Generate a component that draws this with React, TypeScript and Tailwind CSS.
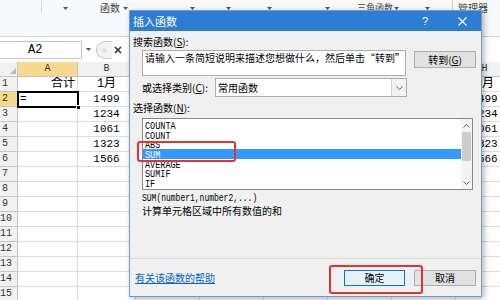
import React from 'react';

const MONO = "font-['Liberation_Mono','Noto_Sans_CJK_SC',monospace]";
const CJK = "font-['Noto_Sans_CJK_SC','Liberation_Sans',sans-serif]";

// C-G sit entirely under the dialog, so their header letters are left out
const COLS = [
  { name: 'A', label: 'A', w: 'w-[60px]' },
  { name: 'B', label: 'B', w: 'w-[58px]' },
  { name: 'C', label: '', w: 'w-[64px]' },
  { name: 'D', label: '', w: 'w-[64px]' },
  { name: 'E', label: '', w: 'w-[64px]' },
  { name: 'F', label: '', w: 'w-[64px]' },
  { name: 'G', label: '', w: 'w-[64px]' },
  { name: 'H', label: 'H', w: 'w-[58px]' },
];

const ROWS: { a?: string; b?: string }[] = [
  { a: '合计', b: '1月' },
  { a: '=', b: '1499' },
  { b: '1234' },
  { b: '1061' },
  { b: '1323' },
  { b: '1566' },
  {}, {}, {}, {}, {}, {}, {}, {}, {},
];

const FUNCS = ['COUNTA', 'COUNT', 'ABS', 'SUM', 'AVERAGE', 'SUMIF', 'IF'];

const Caret = () => (
  <svg width="5" height="3" viewBox="0 0 5 3" className="shrink-0">
    <path d="M0 0 L5 0 L2.5 3 Z" fill="#555" />
  </svg>
);

const Ribbon = () => (
  <div className="flex items-start h-[37px] bg-[#f8f9fa] border-b border-[#d3d3d3] text-[#444]">
    <div className="w-[42px] h-[13px] shrink-0 border-r border-[#d8d8d8]" />
    <div className="ml-[21px] mt-[7px]"><Caret /></div>
    <span className="ml-[32px] text-[10px] leading-[13px] pt-[1px]">函数</span>
    <div className="ml-[3px] mt-[7px]"><Caret /></div>
    <div className="ml-[62px] mt-[7px]"><Caret /></div>
    <div className="ml-[31px] mt-[7px]"><Caret /></div>
    <div className="ml-[36px] mt-[7px]"><Caret /></div>
    <div className="ml-[53px] mt-[7px]"><Caret /></div>
    <span className="ml-[27px] text-[9px] leading-[13px] pt-[1px]">三角函数</span>
    <div className="ml-[1px] mt-[7px]"><Caret /></div>
    <div className="ml-[26px] mt-[7px]"><Caret /></div>
    <div className="ml-[22px] w-px h-[35px] bg-[#d0d0d0]" />
    <span className="ml-[5px] text-[10px] leading-[13px] pt-[1px] whitespace-nowrap">管理器</span>
  </div>
);

const FormulaBar = () => (
  <div className="flex items-center h-[25px] bg-white">
    <div className={`w-[82px] h-[18px] shrink-0 bg-white border border-[#c6c6c6] border-l-0 pl-[28px] text-[12px] leading-[16px] ${MONO}`}>A2</div>
    <div className="ml-[4px]"><Caret /></div>
    <div className="ml-[5px] w-[16px] h-[18px] rounded-l-full border border-r-0 border-[#c6c6c6] bg-[#f2f2f2] flex items-center justify-center text-[8px] text-[#bbb]">=</div>
    <svg width="8" height="8" viewBox="0 0 8 8" className="ml-[2px]">
      <path d="M1 1 L7 7 M7 1 L1 7" stroke="#333" strokeWidth="1.6" />
    </svg>
  </div>
);

const Grid = () => (
  <div className={`relative ${MONO}`}>
    <div className="flex h-[15px]">
      <div className="w-[18px] shrink-0 bg-[#f1f1f1] border-r border-b border-[#c5c5c5] flex items-end justify-end pr-[1px] pb-[2px]">
        <svg width="6" height="6" viewBox="0 0 6 6"><path d="M6 0 L6 6 L0 6 Z" fill="#b9b9b9" /></svg>
      </div>
      {COLS.map((c) => (
        <div
          key={c.name}
          className={`${c.w} shrink-0 border-r border-b border-[#c5c5c5] text-center text-[10px] leading-[14px] text-[#333] ${c.name === 'A' ? 'bg-[#f8d98e]' : 'bg-[#f1f1f1]'}`}
        >
          {c.label}
        </div>
      ))}
    </div>
    {ROWS.map((r, i) => (
      <div key={i} className="flex h-[15px]">
        <div className={`w-[18px] shrink-0 border-r border-b border-[#c5c5c5] text-center pr-[7px] text-[10px] leading-[14px] text-[#333] ${i === 1 ? 'bg-[#f8d98e]' : 'bg-[#f1f1f1]'}`}>
          {i + 1}
        </div>
        {COLS.map((c) => {
          let text: string | undefined;
          let align = 'text-center';
          if (c.name === 'A') {
            text = r.a;
            align = i === 0 ? 'text-right pr-[2px]' : 'text-left pl-[2px]';
          } else if (c.name === 'B' || c.name === 'H') {
            text = r.b;
          }
          return (
            <div
              key={c.name}
              className={`${c.w} shrink-0 border-r border-b border-[#dadcdd] whitespace-nowrap overflow-hidden ${align} ${i === 0 ? 'text-[12px] leading-[15px]' : 'text-[11px] leading-[15px]'}`}
            >
              {text}
            </div>
          );
        })}
      </div>
    ))}
    {/* active cell A2 */}
    <div className="absolute left-[17px] top-[29px] w-[62px] h-[17px] border-2 border-black" />
    <div className="absolute left-[76px] top-[43px] w-[5px] h-[5px] bg-black border border-white" />
  </div>
);

const Chevron = ({ up }: { up?: boolean }) => (
  <svg width="7" height="4" viewBox="0 0 7 4">
    <path d={up ? 'M0.5 3.5 L3.5 0.5 L6.5 3.5' : 'M0.5 0.5 L3.5 3.5 L6.5 0.5'} stroke="#606060" fill="none" strokeWidth="1" />
  </svg>
);

const Dialog = () => (
  <div className={`absolute left-[129px] top-[10px] w-[353px] h-[287px] flex flex-col bg-[#f0f0f0] border border-[#6f9bd3] shadow-[2px_2px_6px_rgba(0,0,0,0.3)] ${CJK}`}>
    <div className="h-[20px] shrink-0 flex items-center bg-[#2d7dd2] text-white pl-[3px]">
      <span className="text-[11px] leading-[20px]">插入函数</span>
      <span className="ml-auto text-[11px] font-['Liberation_Sans',sans-serif]">?</span>
      <svg width="9" height="9" viewBox="0 0 9 9" className="ml-[30px] mr-[14px]">
        <path d="M0.5 0.5 L8.5 8.5 M8.5 0.5 L0.5 8.5" stroke="white" strokeWidth="1.1" />
      </svg>
    </div>

    <div className="flex-1 flex flex-col px-[3px] text-[10px] text-black">
      <div className="mt-[5px] h-[12px] leading-[12px]">
        搜索函数(<span className="underline">S</span>):
      </div>
      <div className="mt-[2px] flex items-start">
        <div className="ml-[9px] w-[264px] h-[26px] bg-white border border-[#abadb3] pl-[2px] pt-[1px] leading-[12px] whitespace-nowrap overflow-hidden">
          请输入一条简短说明来描述您想做什么，然后单击“转到”
        </div>
        <div className="ml-[8px] mt-[1px] w-[62px] h-[17px] bg-[#e1e1e1] border border-[#adadad] flex items-center justify-center leading-[15px]">
          转到(<span className="underline">G</span>)
        </div>
      </div>
      <div className="mt-[2px] h-[19px] flex items-center">
        <span className="ml-[9px] w-[73px] shrink-0 whitespace-nowrap">
          或选择类别(<span className="underline">C</span>):
        </span>
        <div className="w-[192px] h-[19px] bg-white border border-[#abadb3] flex items-center">
          <span className="pl-[2px] flex-1">常用函数</span>
          <div className="w-[15px] h-full border-l border-[#d5d5d5] bg-[#f4f4f4] flex items-center justify-center">
            <Chevron />
          </div>
        </div>
      </div>
      <div className="mt-[5px] h-[12px] leading-[12px]">
        选择函数(<span className="underline">N</span>):
      </div>
      <div className="ml-[9px] mt-[4px] w-[331px] h-[72px] flex bg-white border border-[#828790]">
        <div className="flex-1 pt-[1px]">
          {FUNCS.map((f) => (
            <div
              key={f}
              className={`h-[9.67px] leading-[9.67px] pl-[2px] whitespace-nowrap ${f === 'SUM' ? 'bg-[#3399ff] text-white' : 'text-black'}`}
            >
              <span className={`inline-block origin-left scale-x-[0.85] text-[10px] ${MONO}`}>{f}</span>
            </div>
          ))}
        </div>
        <div className="w-[11px] flex flex-col bg-[#f4f4f4]">
          <div className="h-[13px] flex items-center justify-center"><Chevron up /></div>
          <div className="mx-[1px] h-[29px] bg-[#cdcdcd]" />
          <div className="flex-1" />
          <div className="h-[13px] flex items-center justify-center"><Chevron /></div>
        </div>
      </div>
      <div className="ml-[9px] mt-[2px] h-[10px] leading-[10px] whitespace-nowrap">
        <span className={`inline-block origin-left scale-x-[0.8] text-[10px] leading-[10px] ${MONO}`}>SUM(number1,number2,...)</span>
      </div>
      <div className="ml-[9px] mt-[3px] h-[12px] leading-[12px]">计算单元格区域中所有数值的和</div>
    </div>

    <div className="h-[38px] shrink-0 border-t border-[#dcdcdc] flex items-center pt-[1px] px-[5px] text-[10px]">
      <span className="text-[#0066cc] underline leading-[12px]">有关该函数的帮助</span>
      <div className="ml-auto w-[61px] h-[16px] bg-[#e5f1fb] border border-[#0078d7] flex items-center justify-center leading-[14px]">确定</div>
      <div className="ml-[9px] w-[62px] h-[16px] bg-[#e1e1e1] border border-[#adadad] flex items-center justify-center leading-[14px]">取消</div>
    </div>
  </div>
);

export default function App() {
  return (
    <div className={`relative w-[500px] h-[300px] overflow-hidden bg-white text-black ${CJK}`}>
      <Ribbon />
      <FormulaBar />
      <Grid />
      <Dialog />
      <div className="absolute left-[137px] top-[141px] w-[99px] h-[21px] border-2 border-[#e5322d] rounded-[3px]" />
      <div className="absolute left-[329px] top-[265px] w-[94px] h-[29px] border-2 border-[#e5322d] rounded-[3px]" />
    </div>
  );
}
